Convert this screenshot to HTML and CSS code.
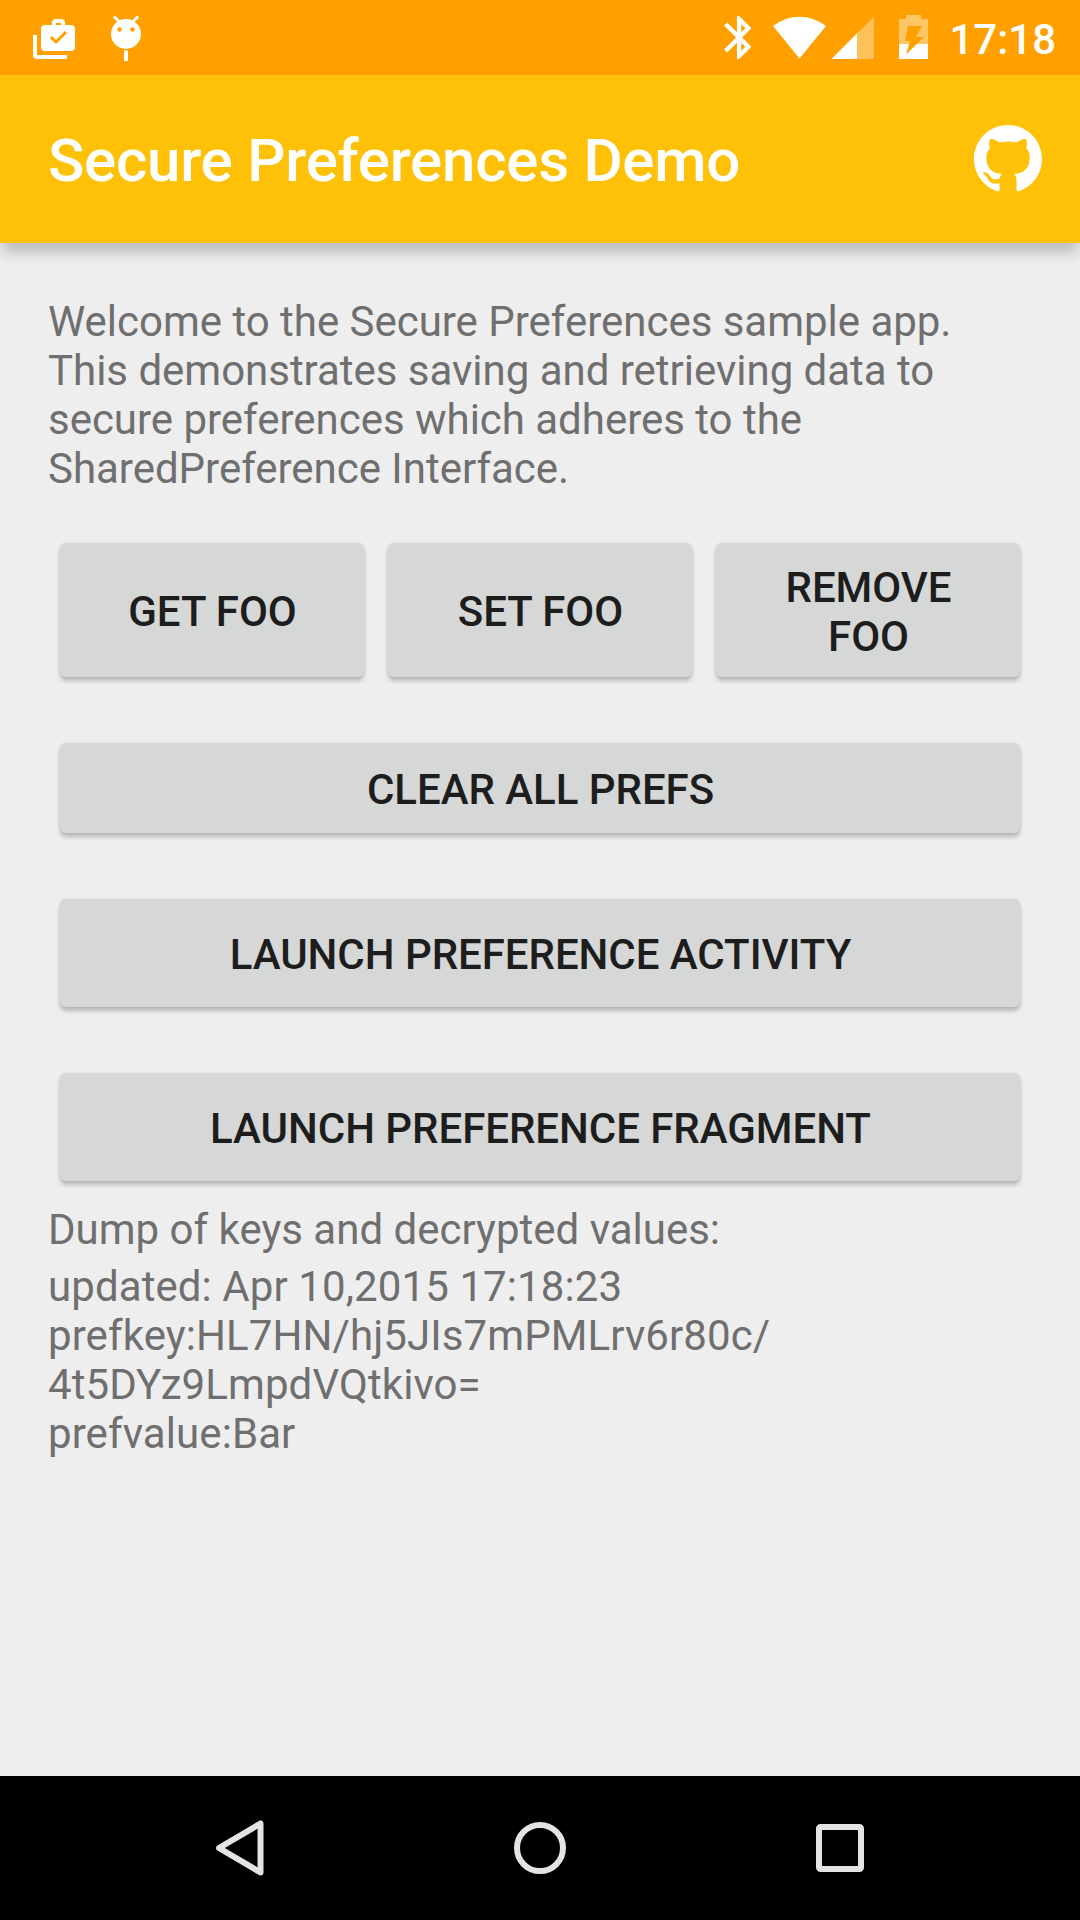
FILE: index.html
```html
<!DOCTYPE html>
<html lang="en">
<head>
<meta charset="utf-8">
<title>Secure Preferences Demo</title>
<link rel="stylesheet" href="styles.css">
</head>
<body>
<div class="screen">
  <div class="status-bar">
    <svg class="status-icons" width="200" height="75" viewBox="0 0 200 75" fill="#fff">
      <path d="M33 35h4v20h30v4H37a4 4 0 0 1-4-4z"/>
      <path fill-rule="evenodd" d="M45 25h7v-2a4 4 0 0 1 4-4h5a4 4 0 0 1 4 4v2h6a4 4 0 0 1 4 4v18a4 4 0 0 1-4 4H45a4 4 0 0 1-4-4V29a4 4 0 0 1 4-4zm11 0h5v-2h-5z"/>
      <path d="M51 37l5 5 10-10" fill="none" stroke="#ffa000" stroke-width="3"/>
      <circle cx="126" cy="34" r="15"/>
      <path d="M114 16.500l6 6M138 16.500l-6 6" fill="none" stroke="#fff" stroke-width="3"/>
      <circle cx="119.500" cy="29.500" r="2.200" fill="#ffa000"/>
      <circle cx="132.500" cy="29.500" r="2.200" fill="#ffa000"/>
      <path d="M124 50.500h4V61h-4z"/>
    </svg>
    <svg class="status-icons" width="240" height="75" viewBox="700 0 240 75" fill="#fff">
      <path transform="translate(713.300 11.700) scale(2.150)" d="M17.710 7.710L12 2h-1v7.590L6.410 5 5 6.410 10.590 12 5 17.590 6.410 19 11 14.410V22h1l5.710-5.710-4.300-4.290 4.300-4.290zM13 5.830l1.880 1.880L13 9.590V5.830zm1.880 10.460L13 18.170v-3.760l1.880 1.880z"/>
      <path d="M773 26a43 43 0 0 1 53 0L799.500 58.500z"/>
      <path d="M874 16.500V59h-42.500z" fill-opacity=".35"/>
      <path d="M857 33.500V59h-25.500z"/>
      <path d="M906 15h15v4h7v25h-29V19h7z" fill-opacity=".4"/>
      <path d="M899 44h29v15h-29z"/>
      <path d="M908 26h14l-6 11h8l-18 17.500 4-13.500h-5z" fill="#ffa000"/>
    </svg>
    <span class="clock">17:18</span>
  </div>
  <header class="app-bar">
    <h1 class="title">Secure Preferences Demo</h1>
    <svg class="github" width="68" height="68" viewBox="0 0 16 16" fill="#fff"><path d="M8 0C3.580 0 0 3.580 0 8c0 3.540 2.290 6.530 5.470 7.590.4.070.55-.17.55-.38 0-.19-.01-.82-.01-1.490-2.010.37-2.530-.49-2.690-.94-.09-.23-.48-.94-.82-1.130-.28-.15-.68-.52-.01-.53.63-.01 1.080.58 1.230.82.72 1.210 1.870.87 2.330.66.07-.52.28-.87.51-1.070-1.780-.2-3.640-.89-3.640-3.950 0-.87.31-1.590.82-2.150-.08-.2-.36-1.020.08-2.120 0 0 .67-.21 2.200.82.64-.18 1.320-.27 2-.27s1.360.09 2 .27c1.530-1.040 2.200-.82 2.200-.82.44 1.100.16 1.920.08 2.120.51.56.82 1.270.82 2.150 0 3.070-1.870 3.750-3.650 3.950.29.25.54.73.54 1.480 0 1.070-.01 1.930-.01 2.200 0 .21.15.46.55.38A8.010 8.010 0 0 0 16 8c0-4.420-3.580-8-8-8z"/></svg>
  </header>
  <main class="content">
    <p class="text intro">Welcome to the Secure Preferences sample app. This demonstrates saving and retrieving data to secure preferences which adheres to the SharedPreference Interface.</p>
    <div class="button-row">
      <button class="button tall">Get Foo</button>
      <button class="button tall">Set Foo</button>
      <button class="button tall">Remove Foo</button>
    </div>
    <button class="button clear">Clear all prefs</button>
    <button class="button launch">Launch preference activity</button>
    <button class="button launch">Launch preference fragment</button>
    <p class="text dump-title">Dump of keys and decrypted values:</p>
    <p class="text dump">updated: Apr 10,2015 17:18:23<br>prefkey:HL7HN/hj5JIs7mPMLrv6r80c/<br>4t5DYz9LmpdVQtkivo=<br>prefvalue:Bar</p>
  </main>
  <nav class="nav-bar">
    <svg class="nav-icon" width="60" height="60" viewBox="0 0 60 60"><path d="M50.500 5.500v49L9 30z"/></svg>
    <svg class="nav-icon" width="60" height="60" viewBox="0 0 60 60"><circle cx="30" cy="30" r="23"/></svg>
    <svg class="nav-icon" width="60" height="60" viewBox="0 0 60 60"><rect x="9" y="9" width="42" height="42" rx="1.500"/></svg>
  </nav>
</div>
</body>
</html>
```

FILE: styles.css
```css
* {
  box-sizing: border-box;
  margin: 0;
}

body {
  background: #eee;
  font-family: Roboto, sans-serif;
  font-size: 42px;
  line-height: 49px;
}

.screen {
  display: flex;
  flex-direction: column;
  width: 1080px;
  height: 1920px;
  overflow: hidden;
}

.status-bar {
  display: flex;
  align-items: center;
  height: 75px;
  padding-right: 24px;
  background: #ffa000;
}

.status-icons {
  display: block;
}

.status-icons + .status-icons {
  margin-left: auto;
}

.clock {
  width: 116px;
  padding-top: 3px;
  color: #fff;
  font-weight: 500;
  text-align: right;
  white-space: nowrap;
}

.app-bar {
  display: flex;
  align-items: center;
  justify-content: space-between;
  height: 168px;
  padding: 0 38px 0 48px;
  background: #ffc107;
  box-shadow: 0 12px 12px -2px rgba(0, 0, 0, 0.2);
}

.title {
  padding-top: 4px;
  color: #fff;
  font-size: 60px;
  font-weight: 500;
  letter-spacing: -0.24px;
  line-height: 70px;
}

.content {
  display: flex;
  flex: 1;
  flex-direction: column;
  padding: 54px 60px 0;
}

.text {
  margin: 0 -12px;
  color: #6f6f6f;
}

.intro {
  letter-spacing: -0.02px;
}

.button-row {
  display: grid;
  grid-template-columns: repeat(3, 304px);
  gap: 24px;
  margin-top: 50px;
}

.button {
  display: flex;
  align-items: center;
  justify-content: center;
  padding: 3px 24px 0 25px;
  border: 0;
  border-radius: 6px;
  background: #d6d7d7;
  box-shadow: 0 4px 4px rgba(0, 0, 0, 0.22), 0 0 2px rgba(0, 0, 0, 0.12);
  color: #1d1d1d;
  font: inherit;
  font-weight: 500;
  letter-spacing: -0.04px;
  text-transform: uppercase;
}

.tall {
  height: 134px;
}

.clear {
  height: 90px;
  margin-top: 66px;
}

.launch {
  height: 108px;
  margin-top: 66px;
}

.dump-title {
  margin-top: 24px;
}

.dump {
  margin-top: 8px;
  letter-spacing: 0.09px;
}

.nav-bar {
  display: flex;
  align-items: center;
  justify-content: center;
  gap: 240px;
  height: 144px;
  background: #000;
}

.nav-icon {
  fill: none;
  stroke: #e4e4e4;
  stroke-width: 6;
  stroke-linejoin: round;
}
```
